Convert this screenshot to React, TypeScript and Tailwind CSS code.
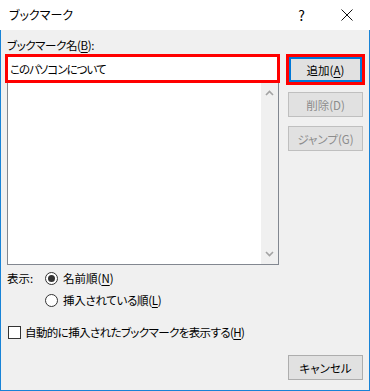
import React from 'react';

const font = "font-['Meiryo_UI','Noto_Sans_CJK_JP',sans-serif] [font-feature-settings:'palt']";

const Chevron: React.FC<{ up?: boolean }> = ({ up }) => (
  <svg width="9" height="6" viewBox="0 0 9 6">
    <path
      d={up ? 'M1 5 L4.5 1.5 L8 5' : 'M1 1 L4.5 4.5 L8 1'}
      fill="none"
      stroke="#a3a3a3"
      strokeWidth="1.6"
    />
  </svg>
);

const Radio: React.FC<{ checked?: boolean }> = ({ checked }) => (
  <span className="flex h-[13px] w-[13px] items-center justify-center rounded-full border border-[#333333] bg-white">
    {checked && <span className="h-[7px] w-[7px] rounded-full bg-[#333333]" />}
  </span>
);

const U: React.FC<{ children: React.ReactNode }> = ({ children }) => (
  <span className="underline underline-offset-2">{children}</span>
);

export default function App() {
  return (
    <div className={`flex h-[391px] w-[370px] flex-col bg-white text-[11.5px] leading-[16px] text-black ${font}`}>
      {/* title bar */}
      <div className="flex h-[30px] items-center bg-white">
        <span className="pl-[9px] text-[12px]">ブックマーク</span>
        <span className="ml-auto mr-[36px] text-[14px]">?</span>
        <svg width="12" height="12" viewBox="0 0 12 12" className="mr-[17px]">
          <path d="M0.5 0.5 L11.5 11.5 M11.5 0.5 L0.5 11.5" stroke="#111" strokeWidth="1" />
        </svg>
      </div>

      {/* body */}
      <div className="flex flex-1 flex-col border-x border-b border-[#1883d7] bg-[#f0f0f0]">
        <div className="flex">
          {/* left column */}
          <div className="ml-[4px] flex w-[275px] flex-col">
            <div className="mt-[7px] pl-[2px] tracking-[-0.4px]">
              ブックマーク名(<U>B</U>):
            </div>
            <div className="mt-[1px] flex h-[29px] items-center border-[3px] border-[#ff0000] bg-white pl-[2px] tracking-[-1px]">
              このパソコンについて
            </div>
            <div className="ml-[2px] flex h-[182px] w-[272px] border border-t-0 border-[#828790] bg-white">
              <div className="flex-1" />
              <div className="flex w-[17px] flex-col items-center justify-between bg-[#f0f0f0] pb-[7px] pt-[7px]">
                <Chevron up />
                <Chevron />
              </div>
            </div>
          </div>

          {/* right column */}
          <div className="ml-[6px] flex flex-col">
            <div className="mt-[24px] h-[31px] w-[79px] border-[3px] border-[#ff0000]">
              <div className="flex h-full w-full items-center justify-center border-2 border-[#0078d7] bg-[#e1e1e1]">
                追加(<U>A</U>)
              </div>
            </div>
            <div className="ml-[2px] mt-[7px] flex h-[25px] w-[75px] items-center justify-center border border-[#bfbfbf] bg-[#e1e1e1] text-[#8c8c8c]">
              削除(D)
            </div>
            <div className="ml-[2px] mt-[9px] flex h-[25px] w-[75px] items-center justify-center border border-[#bfbfbf] bg-[#e1e1e1] text-[#8c8c8c]">
              ジャンプ(G)
            </div>
          </div>
        </div>

        {/* display options */}
        <div className="mt-[5px] flex items-center pl-[6px]">
          <span className="w-[38px]">表示:</span>
          <Radio checked />
          <span className="ml-[5px]">
            名前順(<U>N</U>)
          </span>
        </div>
        <div className="mt-[6px] flex items-center pl-[44px]">
          <Radio />
          <span className="ml-[5px] tracking-[-0.3px]">
            挿入されている順(<U>L</U>)
          </span>
        </div>

        <div className="mt-[16px] flex items-center pl-[7px]">
          <span className="h-[13px] w-[13px] border border-[#333333] bg-white" />
          <span className="ml-[4px] tracking-[-0.6px]">
            自動的に挿入されたブックマークを表示する(<U>H</U>)
          </span>
        </div>

        <div className="mt-[15px] flex justify-end pr-[6px]">
          <div className="flex h-[25px] w-[75px] items-center justify-center border border-[#adadad] bg-[#e1e1e1]">
            キャンセル
          </div>
        </div>
      </div>
    </div>
  );
}
